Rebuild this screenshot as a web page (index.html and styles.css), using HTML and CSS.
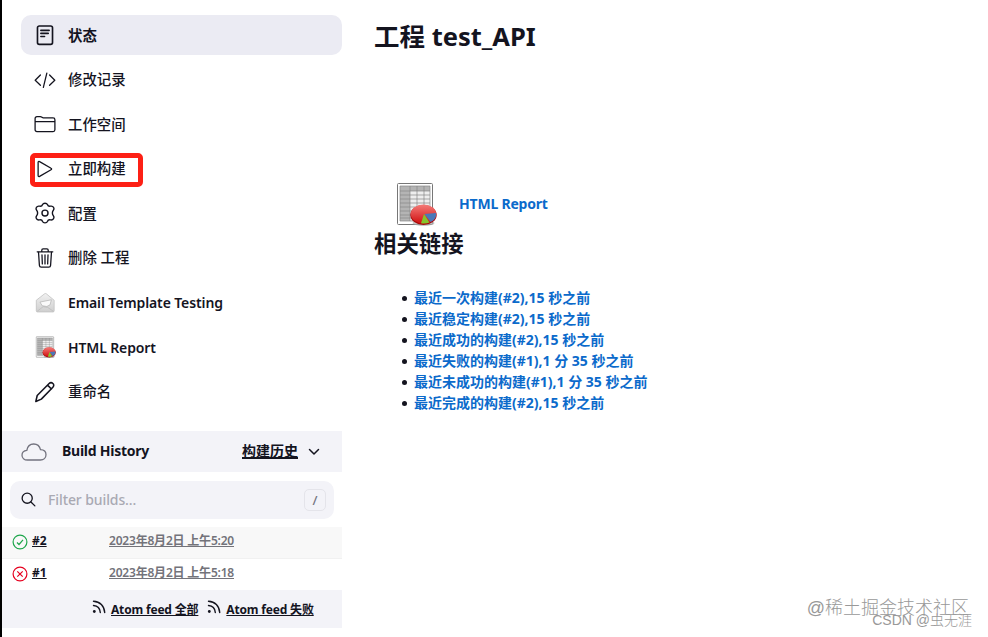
FILE: index.html
```html
<!DOCTYPE html>
<html lang="zh-CN">
<head>
  <meta charset="UTF-8">
  <meta name="viewport" content="width=device-width, initial-scale=1.0">
  <title>test_API [Jenkins]</title>
  <link rel="stylesheet" href="styles.css">
</head>
<body>
  <!-- Shared report icon -->
  <svg class="defs" width="0" height="0">
    <defs>
      <linearGradient id="pie-red" x1="0" y1="0" x2="0" y2="1">
        <stop offset="0" stop-color="#f47b78"/>
        <stop offset="1" stop-color="#d01010"/>
      </linearGradient>
      <linearGradient id="mail-gray" x1="0" y1="0" x2="0" y2="1">
        <stop offset="0" stop-color="#f1f1f1"/>
        <stop offset="1" stop-color="#cfcfcf"/>
      </linearGradient>
      <symbol id="report" viewBox="0 0 42 44">
        <rect x="1.5" y="1.5" width="35" height="41" rx="1" fill="#fff" stroke="#777"/>
        <path d="M4 4h30v35H4z" fill="#eee"/>
        <path d="M4 4h30v5H4zM4 9h10v30H4z" fill="#b4b4b4"/>
        <path d="M4 4h30v35H4zM4 9h30M4 13h30M4 17h30M4 21h30M4 25h30M4 29h30M4 33h30M4 36h30M14 4v35M21 4v35M28 4v35" fill="none" stroke="#888" stroke-width=".7"/>
        <ellipse cx="27.5" cy="41" rx="11" ry="3" fill="#aaa" opacity=".7"/>
        <ellipse cx="27.5" cy="33" rx="13.2" ry="10" fill="#a90909"/>
        <ellipse cx="27.5" cy="32" rx="12.7" ry="9.5" fill="url(#pie-red)"/>
        <path d="M28.500 32l11.5-1c.5 4-1.5 7.500-5.500 9z" fill="#4a78b8"/>
        <path d="M28 32l5.500 8.500c-2.500 1.200-5.500 1.300-8.500.8z" fill="#85c52c"/>
      </symbol>
    </defs>
  </svg>

  <div class="page">
    <aside class="sidebar">
      <nav class="tasks">
        <a class="task task-active">
          <svg class="icon" viewBox="0 0 24 24"><g class="stroke bold"><rect x="3.800" y="2.200" width="16.400" height="20" rx="2"/><path d="M7.500 7h9M7.500 10.300h8M7.500 13.600h4"/></g></svg>
          <span>状态</span>
        </a>
        <a class="task">
          <svg class="icon" viewBox="0 0 24 24"><path class="stroke" d="M7 6.500L1.300 12.300l5.700 5.500M17 6.500l5.700 5.800-5.700 5.500M14 4.500l-3.800 15.500"/></svg>
          <span>修改记录</span>
        </a>
        <a class="task">
          <svg class="icon" viewBox="0 0 24 24"><path class="stroke" d="M1.200 9.500h21.600M1.200 18.300V6a2 2 0 0 1 2-2h3.700c1.500 0 2 1.300 3.200 1.300h10.700a2 2 0 0 1 2 2v11a2 2 0 0 1-2 2H3.200a2 2 0 0 1-2-2z"/></svg>
          <span>工作空间</span>
        </a>
        <a class="task task-marked">
          <svg class="icon" viewBox="0 0 24 24"><path class="stroke" d="M4.500 4.700v14.600c0 .9.800 1.300 1.600.8l12.500-7.300c.8-.4.800-1.200 0-1.600L6.100 3.900C5.300 3.400 4.500 3.800 4.500 4.700z"/></svg>
          <span>立即构建</span>
        </a>
        <a class="task">
          <svg class="icon" viewBox="0 0 24 24"><g class="stroke" transform="translate(-1.200 -.8) scale(1.100 1.070)"><circle cx="12" cy="12" r="3"/><path d="M9.600 3.300c.4-1 1-1.300 2.400-1.300s2 .3 2.400 1.300c.5 1.500 1.600 2.100 3.100 1.700 1.500-.3 2.300.1 3 1.300.7 1.200.7 1.900-.2 2.900-1.300 1.400-1.300 4.200 0 5.600.9 1 .9 1.700.2 2.900-.7 1.200-1.500 1.600-3 1.300-1.500-.4-2.600.2-3.100 1.700-.4 1-1 1.300-2.400 1.300s-2-.3-2.400-1.300c-.5-1.500-1.600-2.100-3.100-1.700-1.500.3-2.300-.1-3-1.300-.7-1.200-.7-1.900.2-2.900 1.300-1.400 1.300-4.200 0-5.600-.9-1-.9-1.700-.2-2.900.7-1.200 1.500-1.600 3-1.300 1.500.4 2.600-.2 3.100-1.700z"/></g></svg>
          <span>配置</span>
        </a>
        <a class="task">
          <svg class="icon" viewBox="0 0 24 24"><path class="stroke" d="M3.500 5.200h17M4.900 5.200l1 14.800c.1 1.300.8 2 2 2h8.200c1.200 0 1.900-.7 2-2l1-14.800M8.500 5V3.500c0-1 .5-1.500 1.400-1.500h4.200c.9 0 1.400.5 1.400 1.500V5M12 8.500v10M8.700 8.500l.4 10M15.300 8.500l-.4 10"/></svg>
          <span>删除 工程</span>
        </a>
        <a class="task task-latin">
          <svg class="icon" viewBox="0 0 24 24"><path d="M2.500 9L11.500 2q1-.8 2 0L22 9v11.500q0 1.300-1.300 1.300H3.800q-1.300 0-1.300-1.300z" fill="url(#mail-gray)" stroke="#bdbdbd" stroke-width=".8"/><path d="M6.500 11l12.500-2.500-1.500 5.500-3.500 1.800-5-.8z" fill="#fafafa" stroke="#aaa" stroke-width=".7"/><path d="M3.500 21l6.500-5 5 .8 6 4.200" fill="none" stroke="#bbb" stroke-width=".8"/></svg>
          <span>Email Template Testing</span>
        </a>
        <a class="task task-latin">
          <svg class="icon" viewBox="0 0 24 24"><use href="#report" x="1.500" y="0" width="23" height="24"/></svg>
          <span>HTML Report</span>
        </a>
        <a class="task">
          <svg class="icon" viewBox="0 0 24 24"><path class="stroke pencil" d="M2 22.300l1.500-6.500L16.500 2.800c1.200-1.200 2.900-1.200 4.100-.1 1.300 1.200 1.200 2.900 0 4.100L8 19.800zM14.800 4.500l4.200 4.200"/></svg>
          <span>重命名</span>
        </a>
      </nav>

      <section class="builds">
        <div class="builds-header">
          <svg class="cloud" viewBox="0 0 26 20"><path d="M6.500 18C3.300 18 1 16 1 13.200c0-2.600 1.900-4.500 4.800-4.800C6.500 4.500 9.200 2 12.700 2c3.400 0 6 2.200 6.800 5.700 3.300.1 5.500 2.200 5.500 5.100 0 3-2.300 5.200-5.600 5.200z" fill="none" stroke="#73737f" stroke-width="1.300"/></svg>
          <span class="builds-title">Build History</span>
          <a class="trend">构建历史</a>
          <svg class="chevron" viewBox="0 0 12 8"><path d="M1.500 1.500L6 6l4.500-4.500" fill="none" stroke="#14141f" stroke-width="1.500" stroke-linecap="round" stroke-linejoin="round"/></svg>
        </div>

        <div class="search">
          <svg class="search-icon" viewBox="0 0 16 16"><g class="stroke"><circle cx="6.600" cy="6.600" r="5.400"/><path d="M10.600 10.600l4.200 4.200"/></g></svg>
          <span class="placeholder">Filter builds...</span>
          <kbd class="shortcut">/</kbd>
        </div>

        <div class="build build-odd">
          <svg class="ball" viewBox="0 0 16 16"><g fill="none" stroke="#1ea64b" stroke-width="1.200"><circle cx="8" cy="8" r="6.900"/><path d="M5 8.500l2 2L11 5.800"/></g></svg>
          <a class="number">#2</a>
          <a class="date">2023年8月2日 上午5:20</a>
        </div>
        <div class="build">
          <svg class="ball" viewBox="0 0 16 16"><g fill="none" stroke="#e6001f" stroke-width="1.200"><circle cx="8" cy="8" r="6.900"/><path d="M5.300 5.300l5.400 5.400M10.700 5.300l-5.400 5.400"/></g></svg>
          <a class="number">#1</a>
          <a class="date">2023年8月2日 上午5:18</a>
        </div>

        <div class="feeds">
          <svg class="rss" viewBox="0 0 14 14"><circle cx="2.300" cy="11.500" r="1.400" fill="#14141f"/><path class="stroke" d="M1.500 5.500c4 .3 6.500 2.900 6.800 7M1.500 1.200c6.500.3 10.800 4.700 11.200 11.300"/></svg>
          <a class="feed">Atom feed 全部</a>
          <svg class="rss" viewBox="0 0 14 14"><circle cx="2.300" cy="11.500" r="1.400" fill="#14141f"/><path class="stroke" d="M1.500 5.500c4 .3 6.500 2.900 6.800 7M1.500 1.200c6.500.3 10.800 4.700 11.200 11.300"/></svg>
          <a class="feed">Atom feed 失败</a>
        </div>
      </section>
    </aside>

    <main class="main">
      <h1>工程 test_API</h1>
      <div class="report-row">
        <svg class="report-icon"><use href="#report"/></svg>
        <a class="report-link">HTML Report</a>
      </div>
      <h2>相关链接</h2>
      <ul class="permalinks">
        <li><a>最近一次构建(#2),15 秒之前</a></li>
        <li><a>最近稳定构建(#2),15 秒之前</a></li>
        <li><a>最近成功的构建(#2),15 秒之前</a></li>
        <li><a>最近失败的构建(#1),1 分 35 秒之前</a></li>
        <li><a>最近未成功的构建(#1),1 分 35 秒之前</a></li>
        <li><a>最近完成的构建(#2),15 秒之前</a></li>
      </ul>
    </main>

    <div class="watermark watermark-large">@稀土掘金技术社区</div>
    <div class="watermark watermark-small">CSDN @虫无涯</div>
  </div>
</body>
</html>
```

FILE: styles.css
```css
*,
*::before,
*::after {
  box-sizing: border-box;
}

body {
  margin: 0;
  background-color: #fff;
  color: #14141f;
  font-family: "Noto Sans", "Noto Sans CJK SC", sans-serif;
  font-size: 14px;
}

.defs {
  position: absolute;
}

.page {
  position: relative;
  display: flex;
  height: 637px;
  border-left: 2px solid #000;
  overflow: hidden;
}

.stroke {
  fill: none;
  stroke: #14141f;
  stroke-width: 1.4;
  stroke-linecap: round;
  stroke-linejoin: round;
}

.stroke.bold {
  stroke-width: 1.8;
}

.stroke.pencil {
  stroke-width: 1.7;
}

/* Sidebar */
.sidebar {
  width: 340px;
  flex: none;
}

.tasks {
  display: flex;
  flex-direction: column;
  gap: 4.6px;
  padding: 15px 0 0 19px;
  margin-bottom: 19px;
}

.task {
  display: flex;
  align-items: center;
  position: relative;
  height: 40px;
  padding-left: 13px;
  gap: 12px;
  border-radius: 10px;
  font-size: 14.4px;
  font-weight: 500;
  line-height: 20px;
  white-space: nowrap;
}

.task span {
  padding-top: 1px;
}

.task-active {
  background-color: #ebebf3;
  font-weight: 700;
}

.task-latin span {
  font-size: 14px;
  font-weight: 600;
  letter-spacing: -0.12px;
}

.task-marked::after {
  content: "";
  position: absolute;
  left: 9px;
  top: 4px;
  width: 113px;
  height: 34px;
  border: 5px solid #fd2015;
  border-radius: 5px;
}

.icon {
  width: 22px;
  height: 22px;
  flex: none;
}

.builds-header {
  display: flex;
  align-items: center;
  height: 41px;
  padding: 0 22px 0 19px;
  background-color: #f3f3f8;
}

.cloud {
  width: 26px;
  height: 20px;
  margin-top: 1px;
  margin-right: 15px;
}

.builds-title {
  padding-bottom: 2px;
  font-weight: 700;
  letter-spacing: -0.25px;
}

.trend {
  margin-left: auto;
  padding-bottom: 2px;
  font-weight: 700;
  text-decoration: underline;
  text-decoration-thickness: 2px;
}

.chevron {
  width: 12px;
  height: 8px;
  margin-top: 2px;
  margin-left: 10px;
}

.search {
  display: flex;
  align-items: center;
  height: 38px;
  margin: 9px 8px 8px;
  padding: 0 8px 0 11px;
  border-radius: 10px;
  background-color: #f3f3f8;
}

.search-icon {
  width: 15px;
  height: 15px;
  margin-right: 12px;
}

.placeholder {
  color: #a9a9b3;
  font-weight: 500;
  letter-spacing: -0.1px;
}

.shortcut {
  width: 22px;
  height: 22px;
  margin-left: auto;
  border: 1px solid #e4e4ea;
  border-radius: 5px;
  color: #73737f;
  font: 500 13px/20px "Noto Sans", sans-serif;
  text-align: center;
}

.build {
  display: flex;
  align-items: center;
  height: 31px;
  padding-left: 10px;
  font-size: 12px;
  font-weight: 700;
}

.build a {
  line-height: 18px;
  padding-bottom: 3px;
  text-decoration: underline;
}

.build-odd {
  height: 32px;
  background-color: #f8f8f8;
  border-bottom: 1px solid #f1f1f1;
}

.ball {
  width: 16px;
  height: 16px;
  margin-right: 4px;
}

.number {
  width: 77px;
}

.build .date {
  color: #73737a;
  font-weight: 600;
  letter-spacing: -0.2px;
}

.feeds {
  display: flex;
  align-items: center;
  height: 38px;
  padding-left: 90px;
  background-color: #f3f3f8;
  font-size: 12px;
  font-weight: 700;
  white-space: nowrap;
}

.rss {
  width: 14px;
  height: 14px;
  margin-right: 5px;
  margin-bottom: 4px;
}

.feed {
  margin-right: 9px;
  letter-spacing: -0.18px;
  text-decoration: underline;
}

/* Main panel */
.main {
  padding: 16px 0 0 32px;
}

h1 {
  margin: 0;
  font-size: 25.5px;
  line-height: 40px;
}

.report-row {
  display: flex;
  align-items: center;
  margin-top: 126px;
  padding-left: 22px;
}

.report-icon {
  width: 42px;
  height: 44px;
  margin-right: 21px;
}

.report-link {
  padding-bottom: 2px;
  color: #0b6acb;
  font-weight: 700;
  letter-spacing: -0.2px;
}

h2 {
  margin: 0;
  font-size: 22.4px;
  line-height: 36px;
}

.permalinks {
  margin: 25px 0 0;
  padding-left: 28px;
  list-style: none;
  font-weight: 700;
  line-height: 21px;
}

.permalinks li {
  display: flex;
  align-items: center;
}

.permalinks li::before {
  content: "";
  width: 5px;
  height: 5px;
  margin-top: 2px;
  margin-right: 7px;
  border-radius: 50%;
  background-color: #14141f;
}

.permalinks a {
  color: #0b6acb;
}

/* Watermarks over the page corner */
.watermark {
  position: absolute;
  white-space: nowrap;
  font-family: "Liberation Sans", "Noto Sans CJK SC", sans-serif;
}

.watermark-large {
  right: 19px;
  bottom: 16px;
  color: #999;
  font-size: 18px;
  font-weight: 300;
  line-height: 26px;
}

.watermark-small {
  right: 16px;
  bottom: 7px;
  color: #999;
  font-size: 14px;
  font-weight: 300;
  line-height: 20px;
}
```
